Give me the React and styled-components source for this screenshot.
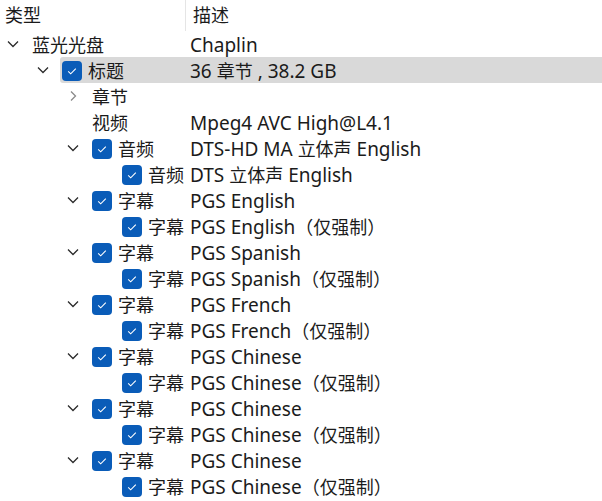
import React from "react";
import styled, { createGlobalStyle } from "styled-components";

const GlobalStyle = createGlobalStyle`
  html, body {
    margin: 0;
    padding: 0;
    background: #fff;
  }
  body {
    font-family: "Noto Sans", "Noto Sans CJK SC", sans-serif;
    font-size: 19px;
    color: #1b1b1b;
  }
`;

const rows = [
  { level: 0, type: "蓝光光盘", desc: "Chaplin", expander: "down" },
  { level: 1, type: "标题", desc: "36 章节 , 38.2 GB", expander: "down", check: true, selected: true },
  { level: 2, type: "章节", desc: "", expander: "right" },
  { level: 2, type: "视频", desc: "Mpeg4 AVC High@L4.1" },
  { level: 2, type: "音频", desc: "DTS-HD MA 立体声 English", expander: "down", check: true },
  { level: 3, type: "音频", desc: "DTS 立体声 English", check: true },
  { level: 2, type: "字幕", desc: "PGS English", expander: "down", check: true },
  { level: 3, type: "字幕", desc: "PGS English（仅强制）", check: true },
  { level: 2, type: "字幕", desc: "PGS Spanish", expander: "down", check: true },
  { level: 3, type: "字幕", desc: "PGS Spanish（仅强制）", check: true },
  { level: 2, type: "字幕", desc: "PGS French", expander: "down", check: true },
  { level: 3, type: "字幕", desc: "PGS French（仅强制）", check: true },
  { level: 2, type: "字幕", desc: "PGS Chinese", expander: "down", check: true },
  { level: 3, type: "字幕", desc: "PGS Chinese（仅强制）", check: true },
  { level: 2, type: "字幕", desc: "PGS Chinese", expander: "down", check: true },
  { level: 3, type: "字幕", desc: "PGS Chinese（仅强制）", check: true },
  { level: 2, type: "字幕", desc: "PGS Chinese", expander: "down", check: true },
  { level: 3, type: "字幕", desc: "PGS Chinese（仅强制）", check: true },
];

// CJK runs get their own (smaller) size so Latin and Han widths both match
const cjkRun = /([\u3000-\u9fff\uff00-\uffef]+)/;
const Text = ({ children }) =>
  String(children)
    .split(cjkRun)
    .filter(Boolean)
    .map((part, i) => (cjkRun.test(part) ? <Han key={i}>{part}</Han> : <span key={i}>{part}</span>));

const Chevron = ({ dir }) =>
  dir === "right" ? (
    <svg width="10" height="12" viewBox="0 0 10 12">
      <path d="M3 1.5 L7.5 6 L3 10.5" fill="none" stroke="#8a8a8a" strokeWidth="1.3" />
    </svg>
  ) : (
    <svg width="12" height="10" viewBox="0 0 12 10">
      <path d="M1 2.5 L6 7.5 L11 2.5" fill="none" stroke="#2b2b2b" strokeWidth="1.3" />
    </svg>
  );

const Check = () => (
  <CheckBox>
    <svg width="20" height="20" viewBox="0 0 20 20">
      <path d="M6.2 10.3 L8.7 12.8 L13.8 7.7" fill="none" stroke="#fff" strokeWidth="1.1" />
    </svg>
  </CheckBox>
);

const App = () => {
  return (
    <Tree>
      <GlobalStyle />
      <Header>
        <HeadCell $first>
          <Text>类型</Text>
        </HeadCell>
        <HeadCell>
          <Text>描述</Text>
        </HeadCell>
      </Header>
      {rows.map((r, i) => (
        <Row key={i} $level={r.level}>
          <Expander>{r.expander && <Chevron dir={r.expander} />}</Expander>
          <Body $selected={r.selected} $level={r.level}>
            <TypeCell>
              {r.check && <Check />}
              <Label>
                <Text>{r.type}</Text>
              </Label>
            </TypeCell>
            <DescCell>
              <Text>{r.desc}</Text>
            </DescCell>
          </Body>
        </Row>
      ))}
    </Tree>
  );
};
export default App;

const Tree = styled.div`
  width: 602px;
  height: 501px;
  overflow: hidden;
  background: #fff;
`;
const Han = styled.span`
  font-family: "Noto Sans CJK SC", sans-serif;
  font-size: 18px;
`;
const Header = styled.div`
  display: flex;
  height: 31px;
`;
const HeadCell = styled.div`
  display: flex;
  align-items: center;
  width: ${(p) => (p.$first ? "186px" : "auto")};
  padding-left: ${(p) => (p.$first ? "5px" : "7px")};
  padding-bottom: 3px;
  box-sizing: border-box;
  border-right: ${(p) => (p.$first ? "1px solid #e5e5e5" : "none")};
  color: #1b1b1b;
`;
const Row = styled.div`
  display: flex;
  height: 26px;
  padding-left: ${(p) => p.$level * 30}px;
`;
const Expander = styled.div`
  width: 30px;
  flex-shrink: 0;
  display: flex;
  align-items: center;
  justify-content: center;
  padding-right: 4px;
  box-sizing: border-box;
`;
const Body = styled.div`
  flex: 1;
  display: grid;
  grid-template-columns: ${(p) => 160 - p.$level * 30}px 1fr;
  align-items: center;
  background: ${(p) => (p.$selected ? "#d9d9d9" : "transparent")};
  border-radius: 3px 0 0 3px;
`;
const TypeCell = styled.div`
  display: flex;
  align-items: center;
  gap: 6px;
  padding-left: 2px;
  white-space: nowrap;
`;
const Label = styled.span`
  line-height: 26px;
`;
const DescCell = styled.div`
  white-space: nowrap;
  line-height: 26px;
`;
const CheckBox = styled.div`
  width: 20px;
  height: 20px;
  border-radius: 4px;
  background: #0a5cb8;
  display: flex;
  flex-shrink: 0;
`;
